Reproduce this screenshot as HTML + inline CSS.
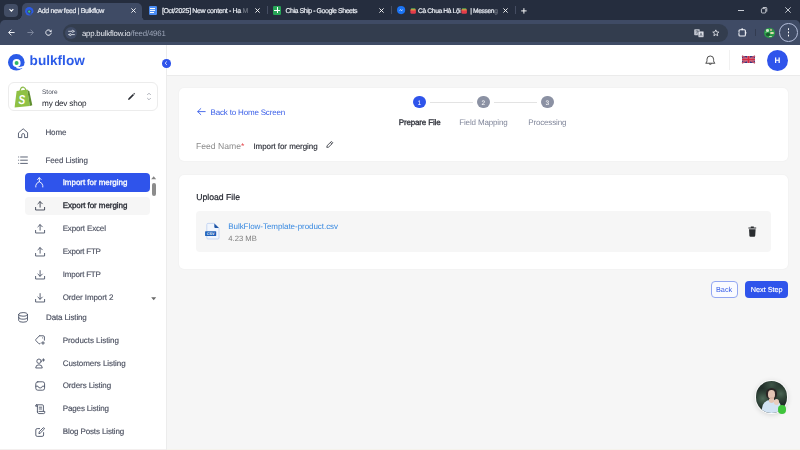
<!DOCTYPE html>
<html><head><meta charset="utf-8"><title>Add new feed | Bulkflow</title>
<style>
*{box-sizing:border-box;margin:0;padding:0}
html,body{text-rendering:geometricPrecision;width:800px;height:450px;overflow:hidden;background:#f6f6f6;font-family:"Liberation Sans",sans-serif;}
.abs{position:absolute}
svg{position:absolute;overflow:visible}
.t{position:absolute;white-space:nowrap;line-height:1}
#chrome{position:absolute;left:0;top:0;width:800px;height:44.7px;background:#252d3e}
#toolbar{position:absolute;left:0;top:20.2px;width:800px;height:24.5px;background:#3f4b65;border-radius:5px 5px 0 0}
#acttab{position:absolute;left:21.5px;top:3px;width:120.5px;height:18px;background:#3f4b65;border-radius:5px 5px 0 0}
#url{position:absolute;left:62.5px;top:24px;width:665.5px;height:18px;border-radius:9px;background:#333d4e}
#sidebar{position:absolute;left:0;top:44.7px;width:167px;height:405px;background:#fff;border-right:1px solid #ececec}
#header{position:absolute;left:167px;top:44.7px;width:633px;height:30.9px;background:#fff;border-bottom:1px solid #ebebeb}
.card{position:absolute;background:#fff;border-radius:5px;box-shadow:0 0 2px rgba(0,0,0,0.06)}
.ic{fill:none;stroke:#4b5267;stroke-width:0.9;stroke-linecap:round;stroke-linejoin:round}
</style></head><body>
<div id="chrome">
  <div id="acttab"></div>
  <div class="abs" style="left:15.5px;top:14.2px;width:6px;height:6px;background:radial-gradient(circle at 0 0,#252d3e 5.7px,#3f4b65 6.2px)"></div>
  <div class="abs" style="left:142px;top:16px;width:5px;height:5px;background:radial-gradient(circle at 100% 0,#252d3e 4.8px,#3f4b65 5.2px)"></div>
  <div id="toolbar"></div>
    <div id="url"></div>
  <!-- tab search -->
  <div class="abs" style="left:3.8px;top:3.8px;width:13.8px;height:13.1px;border-radius:4px;background:#424d65"></div>
  <svg style="left:7.5px;top:8px" width="7" height="5" viewBox="0 0 7 5"><path d="M1.5 1.2 L3.4 3.2 L5.3 1.2" fill="none" stroke="#fff" stroke-width="1.1"/></svg>
  <!-- active tab favicon -->
  <svg style="left:24.7px;top:6.5px" width="8.5" height="8.5" viewBox="0 0 17 17"><circle cx="8.5" cy="8.5" r="8.3" fill="#2b5be8"/><circle cx="8.7" cy="9.2" r="4.4" fill="#3f4b65"/><path d="M8.6 14 Q12.5 15.4 17 13" fill="none" stroke="#3f4b65" stroke-width="2"/><circle cx="8.4" cy="9.2" r="2.3" fill="#2fd08c"/></svg>
  <!-- tab close buttons -->
  <svg style="left:131px;top:8.2px" width="5" height="5" viewBox="0 0 5 5"><path d="M0.4 0.4 L4.6 4.6 M4.6 0.4 L0.4 4.6" stroke="#fff" stroke-width="0.9"/></svg>
  <svg style="left:255px;top:8.2px" width="5" height="5" viewBox="0 0 5 5"><path d="M0.4 0.4 L4.6 4.6 M4.6 0.4 L0.4 4.6" stroke="#fff" stroke-width="0.9"/></svg>
  <svg style="left:378.7px;top:8.2px" width="5" height="5" viewBox="0 0 5 5"><path d="M0.4 0.4 L4.6 4.6 M4.6 0.4 L0.4 4.6" stroke="#fff" stroke-width="0.9"/></svg>
  <svg style="left:503px;top:8.2px" width="5" height="5" viewBox="0 0 5 5"><path d="M0.4 0.4 L4.6 4.6 M4.6 0.4 L0.4 4.6" stroke="#fff" stroke-width="0.9"/></svg>
  <!-- separators -->
  <div class="abs" style="left:267px;top:6.2px;width:1px;height:8.3px;background:#454d62"></div>
  <div class="abs" style="left:391px;top:6.2px;width:1px;height:8.3px;background:#454d62"></div>
  <div class="abs" style="left:514.5px;top:6.2px;width:1px;height:8.3px;background:#454d62"></div>
  <!-- docs icon -->
  <div class="abs" style="left:148.5px;top:6px;width:8.7px;height:9px;border-radius:1.2px;background:#4b8df5"></div>
  <div class="abs" style="left:150.3px;top:8px;width:5.2px;height:0.9px;background:#fff;box-shadow:0 1.9px 0 #fff"></div>
  <div class="abs" style="left:150.3px;top:11.8px;width:3.6px;height:0.9px;background:#fff"></div>
  <!-- sheets icon -->
  <div class="abs" style="left:272.9px;top:6px;width:8.4px;height:8.6px;border-radius:1.2px;background:#27a557"></div>
  <div class="abs" style="left:274.3px;top:9.5px;width:5.6px;height:1px;background:#fff"></div>
  <div class="abs" style="left:276.6px;top:7.3px;width:1px;height:6px;background:#fff"></div>
  <!-- messenger icon -->
  <svg style="left:397px;top:6.3px" width="8.2" height="8.2" viewBox="0 0 10 10"><circle cx="5" cy="5" r="5" fill="#1b74f5"/><path d="M2.2 6.2 L4.2 3.9 L5.6 5.2 L7.8 3.8 L5.8 6.1 L4.4 4.8Z" fill="#fff"/></svg>
  <!-- emoji -->
  <svg style="left:410.4px;top:7.5px" width="6.3" height="6" viewBox="0 0 6.5 6.6"><rect x="0.2" y="1" width="6.1" height="5.4" rx="1.4" fill="#e23c4b"/><rect x="0.8" y="0.2" width="4.9" height="1.5" rx="0.6" fill="#5cb050"/><rect x="0.6" y="1.7" width="5.3" height="0.8" fill="#f4c23c"/></svg>
  <svg style="left:461.4px;top:7.5px" width="6.3" height="6" viewBox="0 0 6.5 6.6"><rect x="0.2" y="1" width="6.1" height="5.4" rx="1.4" fill="#e23c4b"/><rect x="0.8" y="0.2" width="4.9" height="1.5" rx="0.6" fill="#5cb050"/><rect x="0.6" y="1.7" width="5.3" height="0.8" fill="#f4c23c"/></svg>
  <!-- new tab plus -->
  <svg style="left:521.3px;top:7.5px" width="5.8" height="5.8" viewBox="0 0 6 6"><path d="M3 0.2 V5.8 M0.2 3 H5.8" stroke="#fff" stroke-width="1"/></svg>
  <!-- window controls -->
  <div class="abs" style="left:738px;top:9.5px;width:6px;height:0.7px;background:#c9cdd6"></div>
  <svg style="left:761px;top:6.7px" width="6.2" height="6.6" viewBox="0 0 6.2 6.6"><rect x="0.4" y="1.6" width="4.4" height="4.4" rx="1" fill="none" stroke="#e4e7ee" stroke-width="0.8"/><path d="M1.8 0.5 H5 Q5.8 0.5 5.8 1.3 V4.6" fill="none" stroke="#e4e7ee" stroke-width="0.8"/></svg>
  <svg style="left:785px;top:7.4px" width="6" height="6" viewBox="0 0 6 6"><path d="M0.3 0.3 L5.7 5.7 M5.7 0.3 L0.3 5.7" stroke="#e9ecf2" stroke-width="0.8"/></svg>
  <!-- toolbar nav icons -->
  <svg style="left:8.2px;top:29.3px" width="7" height="7" viewBox="0 0 7 7"><path d="M6.6 3.5 H0.8 M3.4 0.7 L0.6 3.5 L3.4 6.3" fill="none" stroke="#e9ecf2" stroke-width="1"/></svg>
  <svg style="left:26.6px;top:29.3px" width="7" height="7" viewBox="0 0 7 7"><path d="M0.4 3.5 H6.2 M3.6 0.7 L6.4 3.5 L3.6 6.3" fill="none" stroke="#7c859b" stroke-width="1"/></svg>
  <svg style="left:45.4px;top:29.2px" width="7.2" height="7.2" viewBox="0 0 7.2 7.2"><path d="M6.2 3.6 A2.7 2.7 0 1 1 5.2 1.5" fill="none" stroke="#e9ecf2" stroke-width="1"/><path d="M6.6 0.4 V2.9 H4.1Z" fill="#e9ecf2"/></svg>
  <!-- site info -->
  <div class="abs" style="left:65.2px;top:27px;width:12px;height:12px;border-radius:50%;background:#3f4b65"></div>
  <svg style="left:67.8px;top:30px" width="7" height="6" viewBox="0 0 7 6"><path d="M0.2 1.3 H3.6 M5.8 1.3 H6.8 M0.2 4.6 H1.2 M3.4 4.6 H6.8" stroke="#e9ecf2" stroke-width="0.8"/><circle cx="4.7" cy="1.3" r="1" fill="none" stroke="#e9ecf2" stroke-width="0.8"/><circle cx="2.3" cy="4.6" r="1" fill="none" stroke="#e9ecf2" stroke-width="0.8"/></svg>
  <!-- translate -->
  <svg style="left:694.2px;top:29.2px" width="10" height="8.5" viewBox="0 0 10 8.5"><rect x="0.2" y="0.2" width="5.6" height="6" rx="0.8" fill="#c3c7d1"/><rect x="4.2" y="2.2" width="5.6" height="6" rx="0.8" fill="#dde0e7" stroke="#333d4e" stroke-width="0.4"/><path d="M1.6 2 H4.4 M3 1.2 V2 M1.8 4.6 Q3.6 3.8 4 2" stroke="#333d4e" stroke-width="0.5" fill="none"/><path d="M5.8 7 L7 3.8 L8.2 7 M6.2 6 H7.8" stroke="#333d4e" stroke-width="0.5" fill="none"/></svg>
  <!-- star -->
  <svg style="left:712px;top:29.2px" width="7.6" height="7.6" viewBox="0 0 24 24"><path d="M12 2.8 L14.8 9.2 L21.6 9.8 L16.4 14.4 L18 21.2 L12 17.6 L6 21.2 L7.6 14.4 L2.4 9.8 L9.2 9.2Z" fill="none" stroke="#e9ecf2" stroke-width="2.6" stroke-linejoin="round"/></svg>
  <!-- extension -->
  <svg style="left:737.6px;top:28px" width="9.2" height="8.8" viewBox="0 0 9.2 8.8"><rect x="1" y="1.7" width="6.4" height="6.3" rx="1.1" fill="none" stroke="#eef0f5" stroke-width="1.15"/><circle cx="4.2" cy="1.3" r="0.95" fill="#eef0f5"/><circle cx="7.7" cy="4.8" r="0.85" fill="#eef0f5"/><circle cx="0.9" cy="4.8" r="0.95" fill="#3f4b65"/><path d="M0.5 3.9 Q1.9 4.8 0.5 5.7" fill="none" stroke="#eef0f5" stroke-width="0.7"/></svg>
  <div class="abs" style="left:755px;top:28.8px;width:0.9px;height:7.4px;background:#323b50"></div>
  <!-- profile -->
  <div class="abs" style="left:764.3px;top:27.6px;width:10.8px;height:10.8px;border-radius:50%;background:#2a9a48;overflow:hidden">
    <div class="abs" style="left:1.6px;top:1.6px;width:3.6px;height:2.4px;background:#cfe8c8;border-radius:50%"></div>
    <div class="abs" style="left:5.6px;top:4.2px;width:3.8px;height:2.2px;background:#e4e0b4;border-radius:50%"></div>
    <div class="abs" style="left:2px;top:5.6px;width:3.4px;height:2.4px;background:#1d5a30;border-radius:50%"></div>
    <div class="abs" style="left:5.8px;top:1.2px;width:2.4px;height:1.8px;background:#d8b49a;border-radius:50%"></div>
    <div class="abs" style="left:4.4px;top:8px;width:3px;height:1.8px;background:#c8d8b8;border-radius:50%"></div>
    <div class="abs" style="left:0.6px;top:4px;width:2px;height:1.6px;background:#56b86c;border-radius:50%"></div>
  </div>
  <!-- menu -->
  <div class="abs" style="left:779px;top:23.3px;width:18.6px;height:18.6px;border-radius:50%;border:0.9px solid #b4bedb"></div>
  <div class="abs" style="left:787.5px;top:28.4px;width:1.7px;height:1.7px;border-radius:50%;background:#fff;box-shadow:0 3.2px 0 #fff,0 6.4px 0 #fff"></div>
</div>

<div id="sidebar"></div>
<div id="header"></div>
<div class="abs" style="left:0;top:448.8px;width:166px;height:1.2px;background:#f3efee"></div>

<div class="abs" style="left:167px;top:449px;width:633px;height:1px;background:#f5f3ec"></div>
<!-- logo -->
<svg style="left:8.2px;top:53.6px" width="16.6" height="16.6" viewBox="0 0 16.6 16.6"><circle cx="8.3" cy="8.3" r="8.3" fill="#2b5be8"/><circle cx="8.6" cy="9.1" r="4" fill="#fff"/><path d="M8.4 13.3 Q12 14.6 16.4 12.6" fill="none" stroke="#fff" stroke-width="1.7"/><circle cx="8.6" cy="8.9" r="2" fill="#2fb868"/></svg>
<div class="abs" style="left:162.1px;top:59.3px;width:8.6px;height:8.6px;border-radius:50%;background:#2f54eb"></div>
<svg style="left:164.2px;top:61.4px" width="4" height="4.4" viewBox="0 0 4 4.4"><path d="M2.9 0.5 L1.1 2.2 L2.9 3.9" fill="none" stroke="#fff" stroke-width="0.8"/></svg>

<!-- store box -->
<div class="abs" style="left:8px;top:82.4px;width:150px;height:28.2px;border:1px solid #ececec;border-radius:6px;background:#fff"></div>
<svg style="left:14px;top:86px" width="19" height="22" viewBox="0 0 19 22"><path d="M2.6 5 L13.2 3.6 L15.8 20 L0.6 21.4Z" fill="#8fc144"/><path d="M13.2 3.6 L15.4 5.6 L18.3 19.2 L15.8 20Z" fill="#5f8e2e"/><path d="M6 5 Q6.8 0.8 9.6 1.2 Q11.6 1.8 11.8 4.4" fill="none" stroke="#86b840" stroke-width="1.1"/><path d="M7.4 3.4 Q8.4 1.8 9.8 2.4" fill="none" stroke="#e8f2d8" stroke-width="0.6"/><text transform="translate(4.6,18.3) scale(0.8,1.02)" font-family="Liberation Sans, sans-serif" font-size="12.6" font-weight="bold" font-style="italic" fill="#fff">S</text></svg>
<svg style="left:127px;top:92px" width="9" height="9" viewBox="0 0 9 9"><path d="M1 8 L1.5 6.3 L5.9 1.9 L7.1 3.1 L2.7 7.5Z M6.4 1.4 L7 0.8 L8.2 2 L7.6 2.6Z" fill="#2a2d34"/></svg>
<svg style="left:146px;top:91px" width="6" height="11" viewBox="0 0 6 11"><path d="M1.2 4 L3 2.2 L4.8 4 M1.2 7 L3 8.8 L4.8 7" fill="none" stroke="#9a9ea8" stroke-width="0.8"/></svg>

<!-- nav icons -->
<svg style="left:17.8px;top:127.6px" width="10.4" height="10.4" viewBox="0 0 10.4 10.4"><path class="ic" d="M0.8 4.6 L5.2 0.8 L9.6 4.6 V9.6 H6.6 V6.8 Q6.6 5.6 5.2 5.6 Q3.8 5.6 3.8 6.8 V9.6 H0.8Z"/></svg>
<svg style="left:18px;top:155.6px" width="10" height="8.4" viewBox="0 0 10 8.4"><path class="ic" d="M2.6 1 H9.4 M2.6 4.2 H9.4 M2.6 7.4 H9.4 M0.6 1 H0.7 M0.6 4.2 H0.7 M0.6 7.4 H0.7"/></svg>
<!-- active + hover pills -->
<div class="abs" style="left:25px;top:173.4px;width:125px;height:18.4px;border-radius:4px;background:#2f54eb"></div>
<div class="abs" style="left:25px;top:196.6px;width:125px;height:18.4px;border-radius:4px;background:#f6f6f6"></div>
<svg style="left:35.4px;top:177px" width="8.6" height="10.6" viewBox="0 0 8.6 10.6"><path d="M4.3 0.8 V4.6 M2.5 2.5 L4.3 0.7 L6.1 2.5 M0.8 10 V8.6 Q0.8 6.4 4.3 4.6 Q7.8 6.4 7.8 8.6 V10" fill="none" stroke="#fff" stroke-width="0.9" stroke-linecap="round" stroke-linejoin="round"/></svg>
<!-- upload icons -->
<svg style="left:34.6px;top:200.8px" width="10.2" height="9.6" viewBox="0 0 10.2 9.6"><path class="ic" style="stroke:#3a3f4e" d="M5.1 6.2 V0.7 M2.9 2.8 L5.1 0.6 L7.3 2.8 M0.6 6.4 V9 H9.6 V6.4"/></svg>
<svg style="left:34.6px;top:223.8px" width="10.2" height="9.6" viewBox="0 0 10.2 9.6"><path class="ic" d="M5.1 6.2 V0.7 M2.9 2.8 L5.1 0.6 L7.3 2.8 M0.6 6.4 V9 H9.6 V6.4"/></svg>
<svg style="left:34.6px;top:246.7px" width="10.2" height="9.6" viewBox="0 0 10.2 9.6"><path class="ic" d="M5.1 6.2 V0.7 M2.9 2.8 L5.1 0.6 L7.3 2.8 M0.6 6.4 V9 H9.6 V6.4"/></svg>
<!-- download icons -->
<svg style="left:34.6px;top:269.6px" width="10.2" height="9.6" viewBox="0 0 10.2 9.6"><path class="ic" d="M5.1 0.6 V6.2 M2.9 4.1 L5.1 6.3 L7.3 4.1 M0.6 6.4 V9 H9.6 V6.4"/></svg>
<svg style="left:34.6px;top:292.6px" width="10.2" height="9.6" viewBox="0 0 10.2 9.6"><path class="ic" d="M5.1 0.6 V6.2 M2.9 4.1 L5.1 6.3 L7.3 4.1 M0.6 6.4 V9 H9.6 V6.4"/></svg>
<!-- scrollbar -->
<svg style="left:151.4px;top:176.2px" width="5.4" height="3.4" viewBox="0 0 5.4 3.4"><path d="M0.2 3.2 L2.7 0.2 L5.2 3.2Z" fill="#858585"/></svg>
<div class="abs" style="left:151.8px;top:182.8px;width:4.6px;height:13.2px;border-radius:2.3px;background:#8c8c8c"></div>
<svg style="left:151.4px;top:297.4px" width="5.4" height="3.4" viewBox="0 0 5.4 3.4"><path d="M0.2 0.2 L2.7 3.2 L5.2 0.2Z" fill="#6a6a6a"/></svg>
<!-- data listing icons -->
<svg style="left:17.8px;top:311.6px" width="10.2" height="10.8" viewBox="0 0 10.2 10.8"><ellipse class="ic" cx="5.1" cy="2.4" rx="4.4" ry="1.8"/><path class="ic" d="M0.7 2.4 V8.4 Q0.7 10.2 5.1 10.2 Q9.5 10.2 9.5 8.4 V2.4 M0.7 5.4 Q0.7 7.2 5.1 7.2 Q9.5 7.2 9.5 5.4"/></svg>
<svg style="left:34.8px;top:335px" width="10.4" height="10" viewBox="0 0 10.4 10"><path class="ic" d="M4.4 0.8 H8.2 Q9.4 0.8 9.4 2 V5.2 M4.4 0.8 L0.9 4.4 Q0.4 5 0.9 5.6 L3.8 8.6 Q4.4 9.1 5 8.6 L5.6 8 M7.4 2.9 H7.5 M8 6.6 V9.4 M6.6 8 H9.4"/></svg>
<svg style="left:34.8px;top:357.6px" width="10.4" height="10.4" viewBox="0 0 10.4 10.4"><circle class="ic" cx="4" cy="3.2" r="2.2"/><path class="ic" d="M0.7 9.6 Q0.7 6.8 4 6.8 Q7.3 6.8 7.3 9.6Z M8.4 0.8 V3.2 M7.2 2 H9.6"/></svg>
<svg style="left:34.8px;top:381px" width="10.4" height="10" viewBox="0 0 10.4 10"><rect class="ic" x="0.8" y="0.8" width="8.8" height="8.4" rx="2"/><path class="ic" d="M0.8 5.2 H3 Q3.4 7 5.2 7 Q7 7 7.4 5.2 H9.6"/></svg>
<svg style="left:34.8px;top:403.6px" width="10.6" height="10.4" viewBox="0 0 10.6 10.4"><path class="ic" d="M2.4 7.8 V2 Q2.4 0.8 1.4 0.8 Q0.6 0.8 0.6 2.2 H2.4 M1.4 0.8 H7.4 Q8.4 0.8 8.4 2 V7 M4.2 3.2 H6.6 M4.2 5 H6.6 M4 7.4 H9.8 V8.2 Q9.8 9.6 8.6 9.6 H3.8 Q2.4 9.6 2.4 7.8"/></svg>
<svg style="left:35px;top:426.6px" width="10.2" height="10.2" viewBox="0 0 10.2 10.2"><path class="ic" d="M4.6 1.6 H2.2 Q0.8 1.6 0.8 3 V8 Q0.8 9.4 2.2 9.4 H7.2 Q8.6 9.4 8.6 8 V5.6 M4 6.4 L4.3 4.8 L8 1 Q8.6 0.5 9.2 1 Q9.7 1.6 9.2 2.2 L5.5 5.9Z"/></svg>

<!-- header -->
<svg style="left:704.8px;top:54.6px" width="10.6" height="10.6" viewBox="0 0 10.6 10.6"><path d="M1 8 Q2 7.2 2 5.6 V4.2 Q2 1 5.3 1 Q8.6 1 8.6 4.2 V5.6 Q8.6 7.2 9.6 8Z M4.2 9 Q5.3 10.2 6.4 9" fill="none" stroke="#3a3a3a" stroke-width="0.9" stroke-linejoin="round" stroke-linecap="round"/></svg>
<div class="abs" style="left:728.6px;top:50px;width:1px;height:19.5px;background:#f1f1f1"></div>
<svg style="left:741.5px;top:56.3px" width="13" height="7" viewBox="0 0 13 7"><rect width="13" height="7" fill="#34347e"/><path d="M0 0 L13 7 M13 0 L0 7" stroke="#b8728c" stroke-width="1.5"/><path d="M0 0 L13 7 M13 0 L0 7" stroke="#d03048" stroke-width="0.7"/><path d="M6.5 0 V7 M0 3.5 H13" stroke="#dc8a9c" stroke-width="2.6"/><path d="M6.5 0 V7 M0 3.5 H13" stroke="#d42a42" stroke-width="1.7"/></svg>
<div class="abs" style="left:766.8px;top:49.5px;width:21px;height:21px;border-radius:50%;background:#2f54eb"></div>

<!-- card 1 -->
<div class="card" style="left:179px;top:88px;width:609px;height:73px"></div>
<svg style="left:196.6px;top:108px" width="8.6" height="7.2" viewBox="0 0 8.6 7.2"><path d="M8.2 3.6 H0.8 M3.8 0.6 L0.7 3.6 L3.8 6.6" fill="none" stroke="#3a5fe8" stroke-width="0.9" stroke-linecap="round" stroke-linejoin="round"/></svg>
<div class="abs" style="left:413.2px;top:95.8px;width:12.5px;height:12.5px;border-radius:50%;background:#2f54eb"></div>
<div class="abs" style="left:477px;top:95.8px;width:12.5px;height:12.5px;border-radius:50%;background:#8b91a3"></div>
<div class="abs" style="left:541px;top:95.8px;width:12.5px;height:12.5px;border-radius:50%;background:#8b91a3"></div>
<div class="abs" style="left:429.5px;top:102px;width:43px;height:0.9px;background:#e3e3e3"></div>
<div class="abs" style="left:493.5px;top:102px;width:43px;height:0.9px;background:#e3e3e3"></div>
<svg style="left:326.4px;top:141.4px" width="7.4" height="7" viewBox="0 0 7.4 7"><path d="M0.8 6.4 L1.1 4.7 L5 0.9 Q5.5 0.4 6.1 0.9 L6.5 1.3 Q7 1.8 6.5 2.3 L2.6 6.1Z M4.4 1.6 L5.9 3" fill="none" stroke="#2a2d36" stroke-width="0.8" stroke-linejoin="round"/></svg>

<!-- card 2 -->
<div class="card" style="left:179px;top:175px;width:609px;height:93.6px"></div>
<div class="abs" style="left:195.8px;top:211.2px;width:575px;height:40.6px;border-radius:4px;background:#f6f6f6"></div>
<!-- file icon -->
<svg style="left:205px;top:223.4px" width="14.4" height="16.4" viewBox="0 0 14.4 16.4"><path d="M3 0.4 H9.4 L14 5 V14.8 Q14 16 12.8 16 H3 Q1.8 16 1.8 14.8 V1.6 Q1.8 0.4 3 0.4Z" fill="#f2f6fd" stroke="#b4caf0" stroke-width="0.7"/><path d="M9.3 0.5 L13.9 5.1 H10.3 Q9.3 5.1 9.3 4.1Z" fill="#1f56a6"/><rect x="0.1" y="8.2" width="11.1" height="4.9" rx="0.6" fill="#1f60ba"/><text x="5.6" y="12" text-anchor="middle" font-family="Liberation Sans, sans-serif" font-size="3.7" font-weight="bold" fill="#fff">CSV</text></svg>
<!-- trash -->
<svg style="left:747.8px;top:226.2px" width="8.6" height="11" viewBox="0 0 8.6 11"><path d="M0.4 1.6 H8.2 V2.6 H0.4Z M2.8 0.4 H5.8 V1.6 H2.8Z" fill="#2a2d30"/><path d="M1 3.2 H7.6 L7.2 9.8 Q7.1 10.7 6.2 10.7 H2.4 Q1.5 10.7 1.4 9.8Z" fill="#2a2d30"/></svg>

<!-- buttons -->
<div class="abs" style="left:710.5px;top:281px;width:27px;height:17px;border:1px solid #93a7f2;border-radius:4px;background:#fafbff"></div>
<div class="abs" style="left:745px;top:281px;width:43px;height:17px;border-radius:4px;background:#2f54eb"></div>

<!-- chat avatar -->
<div class="abs" style="left:754.9px;top:380.4px;width:33.6px;height:33.6px;border-radius:50%;background:#fbfbfb;box-shadow:0 1px 5px rgba(0,0,0,0.13)"></div>
<div class="abs" style="left:755.9px;top:381.4px;width:31.6px;height:31.6px;border-radius:50%;background:radial-gradient(circle at 22% 55%,#4f6b5a 0,#33483c 18%,rgba(43,59,52,0) 34%),radial-gradient(circle at 80% 40%,#4a6554 0,#324639 16%,rgba(43,59,52,0) 32%),radial-gradient(circle at 50% 12%,#3f5648 0,rgba(43,59,52,0) 30%),#212e29;overflow:hidden">
  <div class="abs" style="left:10.6px;top:6.4px;width:11px;height:11px;border-radius:50% 50% 42% 42%;background:#2b2424"></div>
  <div class="abs" style="left:12.6px;top:8.6px;width:7px;height:9px;border-radius:46%;background:#e3c4b4"></div>
  <div class="abs" style="left:13.8px;top:16px;width:4.6px;height:4px;background:#dcb8a8"></div>
  <div class="abs" style="left:6.4px;top:18.2px;width:18.4px;height:18px;border-radius:46% 40% 0 0;background:#d2e3f4"></div>
  <div class="abs" style="left:13.6px;top:17.6px;width:5px;height:3.6px;border-radius:0 0 50% 50%;background:#e3c4b4"></div>
  <div class="abs" style="left:18px;top:17.4px;width:5.4px;height:6px;border-radius:50%;background:#e8cdbf"></div>
</div>
<div class="abs" style="left:777.8px;top:405.3px;width:8.4px;height:8.4px;border-radius:50%;background:#3fc43c"></div>

<div style="position:absolute;left:0;top:0;width:800px;height:450px;will-change:transform"><div class="t" id="t0" style="left:37.50px;top:8.00px;font-size:7.00px;color:#eceff5;font-weight:normal;letter-spacing:-0.352px;-webkit-text-stroke:0.18px #eceff5">Add new feed | Bulkflow</div>
<div class="t" id="t1" style="left:161.90px;top:8.00px;font-size:7.00px;color:#eceff5;font-weight:normal;letter-spacing:-0.346px;-webkit-text-stroke:0.18px #eceff5">[Oct/2025] New content - Ha <span style="opacity:.35">M</span></div>
<div class="t" id="t2" style="left:285.40px;top:8.00px;font-size:7.00px;color:#eceff5;font-weight:normal;letter-spacing:-0.448px;-webkit-text-stroke:0.18px #eceff5">Chia Ship - Google Sheets</div>
<div class="t" id="t3" style="left:418.10px;top:9.00px;font-size:6.70px;color:#eceff5;font-weight:normal;letter-spacing:-0.378px;-webkit-text-stroke:0.18px #eceff5">Cà Chua Hà Lội</div>
<div class="t" id="t4" style="left:470.30px;top:9.00px;font-size:6.70px;color:#eceff5;font-weight:normal;letter-spacing:-0.393px;-webkit-text-stroke:0.18px #eceff5">| Messen<span style="opacity:.35">g</span></div>
<div class="t" id="t5" style="left:81.90px;top:30.00px;font-size:7.80px;color:#e9ecf2;font-weight:normal;letter-spacing:-0.173px;">app.bulkflow.io<span style="color:#9aa3b6">/feed/4961</span></div>
<div class="t" id="t6" style="left:29.60px;top:54.00px;font-size:13.61px;color:#2b5be8;font-weight:bold;letter-spacing:0.000px;">bulkflow</div>
<div class="t" id="t7" style="left:42.00px;top:90.00px;font-size:6.54px;color:#4a4f5c;font-weight:normal;letter-spacing:0.000px;">Store</div>
<div class="t" id="t8" style="left:42.00px;top:100.00px;font-size:8.20px;color:#23262f;font-weight:normal;letter-spacing:-0.185px;">my dev shop</div>
<div class="t" id="t9" style="left:45.50px;top:129.00px;font-size:8.00px;color:#4a4f5f;font-weight:normal;letter-spacing:-0.162px;-webkit-text-stroke:0.15px #4a4f5f">Home</div>
<div class="t" id="t10" style="left:45.50px;top:157.00px;font-size:8.00px;color:#4a4f5f;font-weight:normal;letter-spacing:-0.107px;-webkit-text-stroke:0.15px #4a4f5f">Feed Listing</div>
<div class="t" id="t11" style="left:62.70px;top:179.00px;font-size:8.00px;color:#ffffff;font-weight:normal;letter-spacing:-0.042px;-webkit-text-stroke:0.3px #fff">Import for merging</div>
<div class="t" id="t12" style="left:62.70px;top:202.00px;font-size:8.00px;color:#23262f;font-weight:normal;letter-spacing:-0.068px;-webkit-text-stroke:0.3px #23262f">Export for merging</div>
<div class="t" id="t13" style="left:62.70px;top:225.00px;font-size:8.00px;color:#4a4f5f;font-weight:normal;letter-spacing:-0.152px;-webkit-text-stroke:0.15px #4a4f5f">Export Excel</div>
<div class="t" id="t14" style="left:62.70px;top:248.00px;font-size:8.00px;color:#4a4f5f;font-weight:normal;letter-spacing:-0.245px;-webkit-text-stroke:0.15px #4a4f5f">Export FTP</div>
<div class="t" id="t15" style="left:62.70px;top:271.00px;font-size:8.00px;color:#4a4f5f;font-weight:normal;letter-spacing:-0.202px;-webkit-text-stroke:0.15px #4a4f5f">Import FTP</div>
<div class="t" id="t16" style="left:62.70px;top:294.00px;font-size:8.00px;color:#4a4f5f;font-weight:normal;letter-spacing:-0.101px;-webkit-text-stroke:0.15px #4a4f5f">Order Import 2</div>
<div class="t" id="t17" style="left:46.00px;top:314.00px;font-size:8.00px;color:#4a4f5f;font-weight:normal;letter-spacing:-0.130px;-webkit-text-stroke:0.15px #4a4f5f">Data Listing</div>
<div class="t" id="t18" style="left:62.70px;top:337.00px;font-size:8.00px;color:#4a4f5f;font-weight:normal;letter-spacing:-0.046px;-webkit-text-stroke:0.15px #4a4f5f">Products Listing</div>
<div class="t" id="t19" style="left:62.70px;top:360.00px;font-size:8.00px;color:#4a4f5f;font-weight:normal;letter-spacing:-0.066px;-webkit-text-stroke:0.15px #4a4f5f">Customers Listing</div>
<div class="t" id="t20" style="left:62.70px;top:382.00px;font-size:8.00px;color:#4a4f5f;font-weight:normal;letter-spacing:-0.101px;-webkit-text-stroke:0.15px #4a4f5f">Orders Listing</div>
<div class="t" id="t21" style="left:62.80px;top:405.00px;font-size:8.00px;color:#4a4f5f;font-weight:normal;letter-spacing:-0.150px;-webkit-text-stroke:0.15px #4a4f5f">Pages Listing</div>
<div class="t" id="t22" style="left:62.80px;top:428.00px;font-size:8.00px;color:#4a4f5f;font-weight:normal;letter-spacing:-0.123px;-webkit-text-stroke:0.15px #4a4f5f">Blog Posts Listing</div>
<div class="t" id="t23" style="left:774.40px;top:57.00px;font-size:8.03px;color:#ffffff;font-weight:bold;letter-spacing:0.000px;">H</div>
<div class="t" id="t24" style="left:210.60px;top:109.00px;font-size:8.00px;color:#3a5fe8;font-weight:normal;letter-spacing:-0.180px;">Back to Home Screen</div>
<div class="t" id="t25" style="left:417.60px;top:101.00px;font-size:6.50px;color:#ffffff;font-weight:normal;letter-spacing:-0.028px;">1</div>
<div class="t" id="t26" style="left:481.40px;top:101.00px;font-size:6.50px;color:#ffffff;font-weight:normal;letter-spacing:-0.028px;">2</div>
<div class="t" id="t27" style="left:545.40px;top:101.00px;font-size:6.50px;color:#ffffff;font-weight:normal;letter-spacing:-0.028px;">3</div>
<div class="t" id="t28" style="left:398.75px;top:119.00px;font-size:8.00px;color:#2a2d36;font-weight:normal;letter-spacing:-0.152px;-webkit-text-stroke:0.3px #2a2d36">Prepare File</div>
<div class="t" id="t29" style="left:459.25px;top:119.00px;font-size:8.00px;color:#80869a;font-weight:normal;letter-spacing:-0.154px;">Field Mapping</div>
<div class="t" id="t30" style="left:528.25px;top:119.00px;font-size:8.00px;color:#80869a;font-weight:normal;letter-spacing:-0.158px;">Processing</div>
<div class="t" id="t31" style="left:196.00px;top:142.00px;font-size:8.62px;color:#8c8c8c;font-weight:normal;letter-spacing:0.000px;">Feed Name<span style="color:#e5484d">*</span></div>
<div class="t" id="t32" style="left:253.40px;top:143.00px;font-size:8.00px;color:#2a2d36;font-weight:normal;letter-spacing:-0.065px;-webkit-text-stroke:0.15px #2a2d36">Import for merging</div>
<div class="t" id="t33" style="left:196.25px;top:193.00px;font-size:8.66px;color:#23262f;font-weight:normal;letter-spacing:0.000px;-webkit-text-stroke:0.2px #23262f">Upload File</div>
<div class="t" id="t34" style="left:228.25px;top:223.00px;font-size:8.00px;color:#3688e0;font-weight:normal;letter-spacing:-0.048px;">BulkFlow-Template-product.csv</div>
<div class="t" id="t35" style="left:228.25px;top:235.00px;font-size:7.66px;color:#7d7d7d;font-weight:normal;letter-spacing:0.000px;">4.23 MB</div>
<div class="t" id="t36" style="left:716.00px;top:286.00px;font-size:7.30px;color:#3a5fe8;font-weight:normal;letter-spacing:0.000px;">Back</div>
<div class="t" id="t37" style="left:750.70px;top:286.00px;font-size:7.29px;color:#ffffff;font-weight:normal;letter-spacing:0.000px;-webkit-text-stroke:0.12px #fff">Next Step</div></div>
</body></html>
